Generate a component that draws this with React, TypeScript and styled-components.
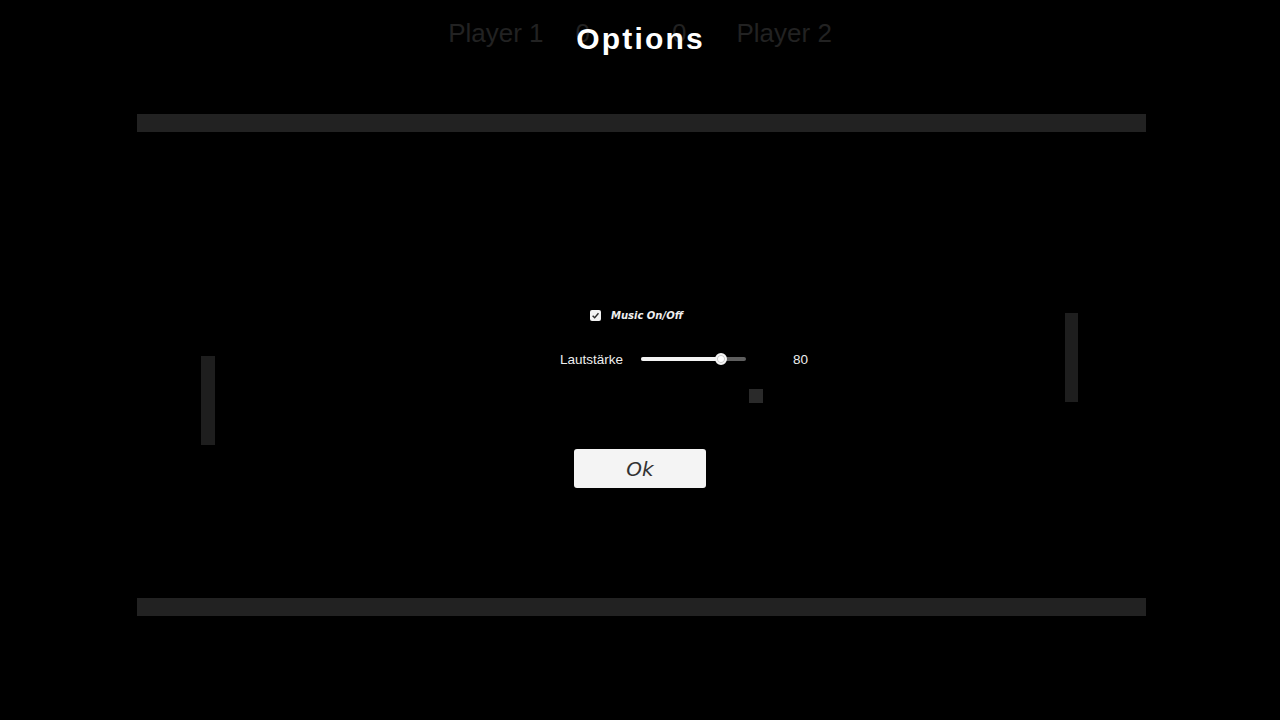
import React from 'react';
import styled, {createGlobalStyle} from 'styled-components';

const GlobalStyle = createGlobalStyle`
  html, body {
    margin: 0;
    padding: 0;
    background: #000;
  }
  body {
    font-family: 'Liberation Sans', Arial, sans-serif;
  }
`;

const VOLUME = 80;
const TRACK_WIDTH = 105;
const HANDLE_SIZE = 12;

export default function App() {
  const handleCenter = HANDLE_SIZE / 2 + ((TRACK_WIDTH - HANDLE_SIZE) * VOLUME) / 100;

  return (
    <Screen>
      <GlobalStyle />
      <ScoreBar>
        <PlayerName>Player 1</PlayerName>
        <Score $gapRight={82}>0</Score>
        <Score $gapRight={50}>0</Score>
        <PlayerName>Player 2</PlayerName>
      </ScoreBar>

      <Field>
        <Wall />
        <Wall />
        <Paddle $left={64} $top={242} $width={14} />
        <Paddle $left={928} $top={199} $width={13} />
        <Ball />
      </Field>

      <Overlay>
        <Title>Options</Title>
        <Panel>
          <CheckRow>
            <CheckBox>
              <svg width="9" height="9" viewBox="0 0 10 10">
                <path d="M1.8 5.2 L4.1 7.5 L8.3 2.6" fill="none" stroke="#2b2b2b" strokeWidth="1.6" />
              </svg>
            </CheckBox>
            <CheckLabel>Music On/Off</CheckLabel>
          </CheckRow>
          <SliderRow>
            <SliderLabel>Lautstärke</SliderLabel>
            <Track>
              <TrackFill style={{width: handleCenter}} />
              <Handle style={{left: handleCenter - HANDLE_SIZE / 2}} />
            </Track>
            <SliderValue>{VOLUME}</SliderValue>
          </SliderRow>
        </Panel>
        <OkButton type="button">Ok</OkButton>
      </Overlay>
    </Screen>
  );
}

const Screen = styled.div`
  position: relative;
  width: 1280px;
  height: 720px;
  background: #000;
  overflow: hidden;
  display: flex;
  flex-direction: column;
`;

const ScoreBar = styled.div`
  display: flex;
  justify-content: center;
  padding-top: 18px;
  height: 30px;
  font-size: 26px;
  line-height: 30px;
  color: #222;
`;

const PlayerName = styled.div`
  &:first-child {
    margin-right: 32px;
  }
`;

const Score = styled.div<{$gapRight: number}>`
  margin-right: ${p => p.$gapRight}px;
`;

const Field = styled.div`
  position: relative;
  margin: 66px 0 0 137px;
  width: 1009px;
  height: 502px;
  display: flex;
  flex-direction: column;
  justify-content: space-between;
`;

const Wall = styled.div`
  height: 18px;
  background: #222;
`;

const Paddle = styled.div<{$left: number; $top: number; $width: number}>`
  position: absolute;
  left: ${p => p.$left}px;
  top: ${p => p.$top}px;
  width: ${p => p.$width}px;
  height: 89px;
  background: #1e1e1e;
`;

const Ball = styled.div`
  position: absolute;
  left: 612px;
  top: 275px;
  width: 14px;
  height: 14px;
  background: #2a2a2a;
`;

const Overlay = styled.div`
  position: absolute;
  inset: 0;
  display: flex;
  flex-direction: column;
  align-items: center;
`;

const Title = styled.h1`
  margin: 21px 0 0 1px;
  height: 36px;
  font-size: 30px;
  line-height: 36px;
  font-weight: 700;
  letter-spacing: 2.2px;
  color: #fff;
`;

const Panel = styled.div`
  align-self: flex-start;
  margin: 252px 0 0 560px;
  width: 248px;
  display: flex;
  flex-direction: column;
  gap: 30px;
`;

const CheckRow = styled.div`
  display: flex;
  align-items: center;
  gap: 10px;
  height: 12px;
  padding-left: 30px;
`;

const CheckBox = styled.div`
  width: 11px;
  height: 11px;
  border-radius: 2px;
  background: #f2f2f2;
  display: flex;
  align-items: center;
  justify-content: center;
`;

const CheckLabel = styled.span`
  font-family: 'DejaVu Sans', Verdana, sans-serif;
  font-size: 10px;
  font-style: italic;
  font-weight: 700;
  color: #eee;
`;

const SliderRow = styled.div`
  display: grid;
  grid-template-columns: 81px ${TRACK_WIDTH}px 1fr;
  align-items: center;
  height: 16px;
`;

const SliderLabel = styled.span`
  font-size: 13.5px;
  color: #eee;
`;

const Track = styled.div`
  position: relative;
  height: 4px;
  border-radius: 2px;
  background: #5e5e5e;
`;

const TrackFill = styled.div`
  height: 100%;
  border-radius: 2px;
  background: #f4f4f4;
`;

const Handle = styled.div`
  position: absolute;
  top: -4px;
  width: ${HANDLE_SIZE}px;
  height: ${HANDLE_SIZE}px;
  box-sizing: border-box;
  border-radius: 50%;
  background: #fff;
  border: 2px solid #f4f4f4;
  box-shadow: inset 0 0 0 1px #ccc;
`;

const SliderValue = styled.span`
  text-align: right;
  font-size: 13.5px;
  color: #eee;
`;

const OkButton = styled.button`
  margin-top: 82px;
  width: 132px;
  height: 39px;
  border: none;
  border-radius: 3px;
  background: #f4f4f4;
  font-family: 'DejaVu Sans', Verdana, sans-serif;
  font-size: 20px;
  font-style: italic;
  color: #333;
  padding: 0;
`;
